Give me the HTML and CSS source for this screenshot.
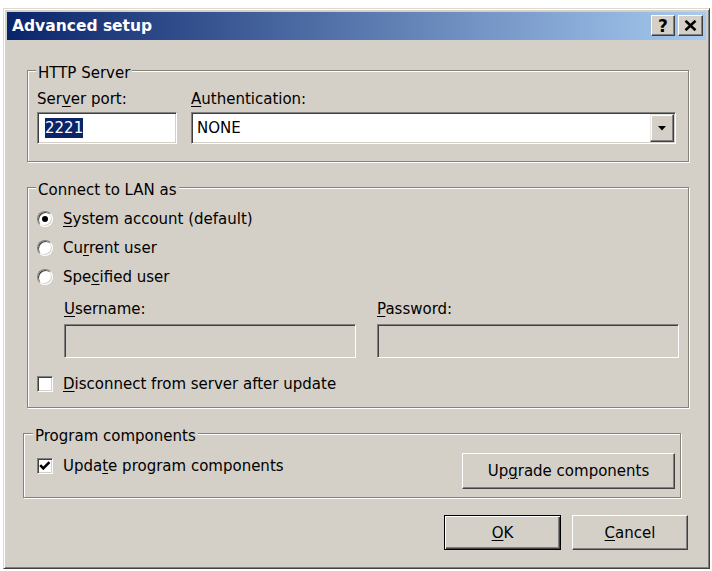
FILE: index.html
```html
<!DOCTYPE html>
<html>
<head>
<meta charset="utf-8">
<title>Advanced setup</title>
<link rel="stylesheet" href="styles.css">
</head>
<body>
<div class="window">
  <div class="titlebar">
    <span class="title">Advanced setup</span>
    <div class="caption-buttons">
      <div class="cap-btn help">?</div>
      <div class="cap-btn close">
        <svg width="13" height="11" viewBox="0 0 13 11"><path d="M1.5 0.8 L11.5 10.2 M11.5 0.8 L1.5 10.2" stroke="#000" stroke-width="2.6" fill="none"/></svg>
      </div>
    </div>
  </div>

  <div class="client">
    <div class="group group-http">
      <span class="legend">HTTP Server</span>
      <div class="http-row">
        <div class="port-col">
          <div class="label">Ser<u>v</u>er port:</div>
          <div class="edit port"><span class="sel">2221</span></div>
        </div>
        <div class="auth-col">
          <div class="label"><u>A</u>uthentication:</div>
          <div class="combo">
            <span class="combo-text">NONE</span>
            <span class="combo-btn">
              <svg width="8" height="5" viewBox="0 0 8 5"><polygon points="0,0 8,0 4,4.5" fill="#000"/></svg>
            </span>
          </div>
        </div>
      </div>
    </div>

    <div class="group group-lan">
      <span class="legend">Connect to LAN as</span>
      <div class="opt-row"><span class="radio checked"></span><span><u>S</u>ystem account (default)</span></div>
      <div class="opt-row"><span class="radio"></span><span>Cu<u>r</u>rent user</span></div>
      <div class="opt-row"><span class="radio"></span><span>Spe<u>c</u>ified user</span></div>
      <div class="fields-row">
        <div class="user-col">
          <div class="label label-gap"><u>U</u>sername:</div>
          <div class="edit disabled"></div>
        </div>
        <div class="pass-col">
          <div class="label label-gap"><u>P</u>assword:</div>
          <div class="edit disabled"></div>
        </div>
      </div>
      <div class="opt-row disconnect"><span class="check"></span><span><u>D</u>isconnect from server after update</span></div>
    </div>

    <div class="group group-prog">
      <span class="legend">Program components</span>
      <div class="opt-row">
        <span class="check">
          <svg class="tick" width="16" height="16" viewBox="0 0 16 16"><polyline points="3.2,7.2 6.3,10.4 12.4,4.2" stroke="#000" stroke-width="2.6" fill="none"/></svg>
        </span>
        <span>Upda<u>t</u>e program components</span>
      </div>
      <div class="btn upgrade">Up<u>g</u>rade components</div>
    </div>

    <div class="dialog-buttons">
      <div class="btn default ok"><u>O</u>K</div>
      <div class="btn cancel"><u>C</u>ancel</div>
    </div>
  </div>
</div>
</body>
</html>
```

FILE: styles.css
```css
* { box-sizing: border-box; }

html, body {
  margin: 0;
  padding: 0;
  background: #ffffff;
}

body {
  font-family: "DejaVu Sans", Verdana, sans-serif;
  font-size: 15px;
  line-height: 18px;
  color: #000000;
}

u { text-decoration: underline; text-underline-offset: 2px; text-decoration-thickness: 1px; }

.window {
  margin: 8px 0 0 3px;
  width: 707px;
  height: 561px;
  background: #d4d0c8;
  border: 1px solid;
  border-color: #dcd9d2 #404040 #404040 #dcd9d2;
  box-shadow: inset 1px 1px 0 #ffffff, inset -1px -1px 0 #808080;
  padding: 3px;
  display: flex;
  flex-direction: column;
}

/* Title bar */
.titlebar {
  height: 28px;
  flex: none;
  display: flex;
  align-items: center;
  padding: 0 3px 0 5px;
  background: linear-gradient(90deg, #0a246a 0%, #a6caf0 100%);
}

.title {
  color: #ffffff;
  font-weight: bold;
  font-size: 15.5px;
  line-height: 18px;
}

.caption-buttons {
  margin-left: auto;
  align-self: flex-start;
  margin-top: 3px;
  display: flex;
  gap: 3px;
}

.cap-btn {
  width: 24px;
  height: 21px;
  background: #d4d0c8;
  border: 1px solid;
  border-color: #ffffff #404040 #404040 #ffffff;
  box-shadow: inset -1px -1px 0 #808080;
  display: flex;
  align-items: center;
  justify-content: center;
  color: #000;
}

.cap-btn.help {
  font-weight: bold;
  font-size: 17px;
  line-height: 17px;
  padding-top: 1px;
}

.cap-btn.close { width: 25px; }

/* Client area */
.client {
  flex: 1;
  padding-top: 30px;
  display: flex;
  flex-direction: column;
}

.group {
  position: relative;
  border: 1px solid #858279;
  box-shadow: 1px 1px 0 #ffffff, inset 1px 1px 0 #ffffff;
}

.legend {
  position: absolute;
  top: -7px;
  left: 8px;
  padding: 0 2px;
  background: #d4d0c8;
  white-space: nowrap;
}

.label {
  height: 18px;
  margin-bottom: 4px;
  white-space: nowrap;
}

.label-gap { margin-bottom: 6px; }

.edit, .combo {
  background: #ffffff;
  border: 1px solid;
  border-color: #808080 #ffffff #ffffff #808080;
  box-shadow: inset 1px 1px 0 #404040, inset -1px -1px 0 #d4d0c8;
}

/* HTTP group */
.group-http {
  margin: 0 17px 0 20px;
  padding: 19px 12px 17px 9px;
}

.http-row {
  display: flex;
  gap: 14px;
}

.port-col { width: 140px; }
.auth-col { flex: 1; }

.edit.port {
  height: 32px;
  display: flex;
  align-items: center;
  padding-left: 7px;
}

.sel {
  background: #0a246a;
  color: #ffffff;
  line-height: 20px;
}

.combo {
  height: 32px;
  display: flex;
  align-items: center;
  padding: 1px;
}

.combo-text { padding-left: 4px; }

.combo-btn {
  margin-left: auto;
  width: 24px;
  height: 28px;
  background: #d4d0c8;
  border: 1px solid;
  border-color: #e8e6e1 #404040 #404040 #e8e6e1;
  box-shadow: inset -1px -1px 0 #808080, inset 1px 1px 0 #ffffff;
  display: flex;
  align-items: center;
  justify-content: center;
}

/* LAN group */
.group-lan {
  margin: 25px 17px 0 20px;
  padding: 16px 9px 9px 9px;
}

.opt-row {
  height: 29px;
  display: flex;
  align-items: center;
  gap: 10px;
  white-space: nowrap;
}

.radio {
  position: relative;
  flex: none;
  width: 16px;
  height: 16px;
  border-radius: 50%;
  background: #ffffff;
  border: 1px solid;
  border-color: #808080 #ffffff #ffffff #808080;
  box-shadow: inset 1px 1px 0 #404040, inset -1px -1px 0 #d4d0c8;
}

.radio.checked::after {
  content: "";
  position: absolute;
  left: 4px;
  top: 4px;
  width: 6px;
  height: 6px;
  border-radius: 50%;
  background: #000;
}

.check {
  position: relative;
  flex: none;
  width: 16px;
  height: 16px;
  background: #ffffff;
  border: 1px solid;
  border-color: #808080 #ffffff #ffffff #808080;
  box-shadow: inset 1px 1px 0 #404040, inset -1px -1px 0 #d4d0c8;
}

.tick {
  position: absolute;
  left: -1px;
  top: -1px;
}

.fields-row {
  display: flex;
  gap: 21px;
  padding-left: 27px;
  margin-top: 9px;
}

.user-col { width: 292px; }
.pass-col { width: 302px; }

.edit.disabled {
  height: 34px;
  background: #d4d0c8;
}

.disconnect { margin-top: 11px; }

/* Program group */
.group-prog {
  margin: 25px 25px 0 16px;
  padding: 17px 5px 8px 13px;
  display: flex;
  align-items: flex-start;
  justify-content: space-between;
}

.group-prog .legend { left: 9px; }

.btn {
  background: #d4d0c8;
  border: 1px solid;
  border-color: #ffffff #404040 #404040 #ffffff;
  box-shadow: inset -1px -1px 0 #808080;
  display: flex;
  align-items: center;
  justify-content: center;
  white-space: nowrap;
}

.btn.upgrade {
  margin-top: 2px;
  width: 213px;
  height: 36px;
}

.dialog-buttons {
  display: flex;
  justify-content: flex-end;
  gap: 11px;
  margin-top: 17px;
  padding-right: 18px;
}

.btn.ok { width: 117px; height: 35px; }
.btn.cancel { width: 116px; height: 35px; }

.btn.default {
  border: 1px solid #000000;
  box-shadow: inset 1px 1px 0 #ffffff, inset -1px -1px 0 #404040, inset -2px -2px 0 #808080;
}
```
